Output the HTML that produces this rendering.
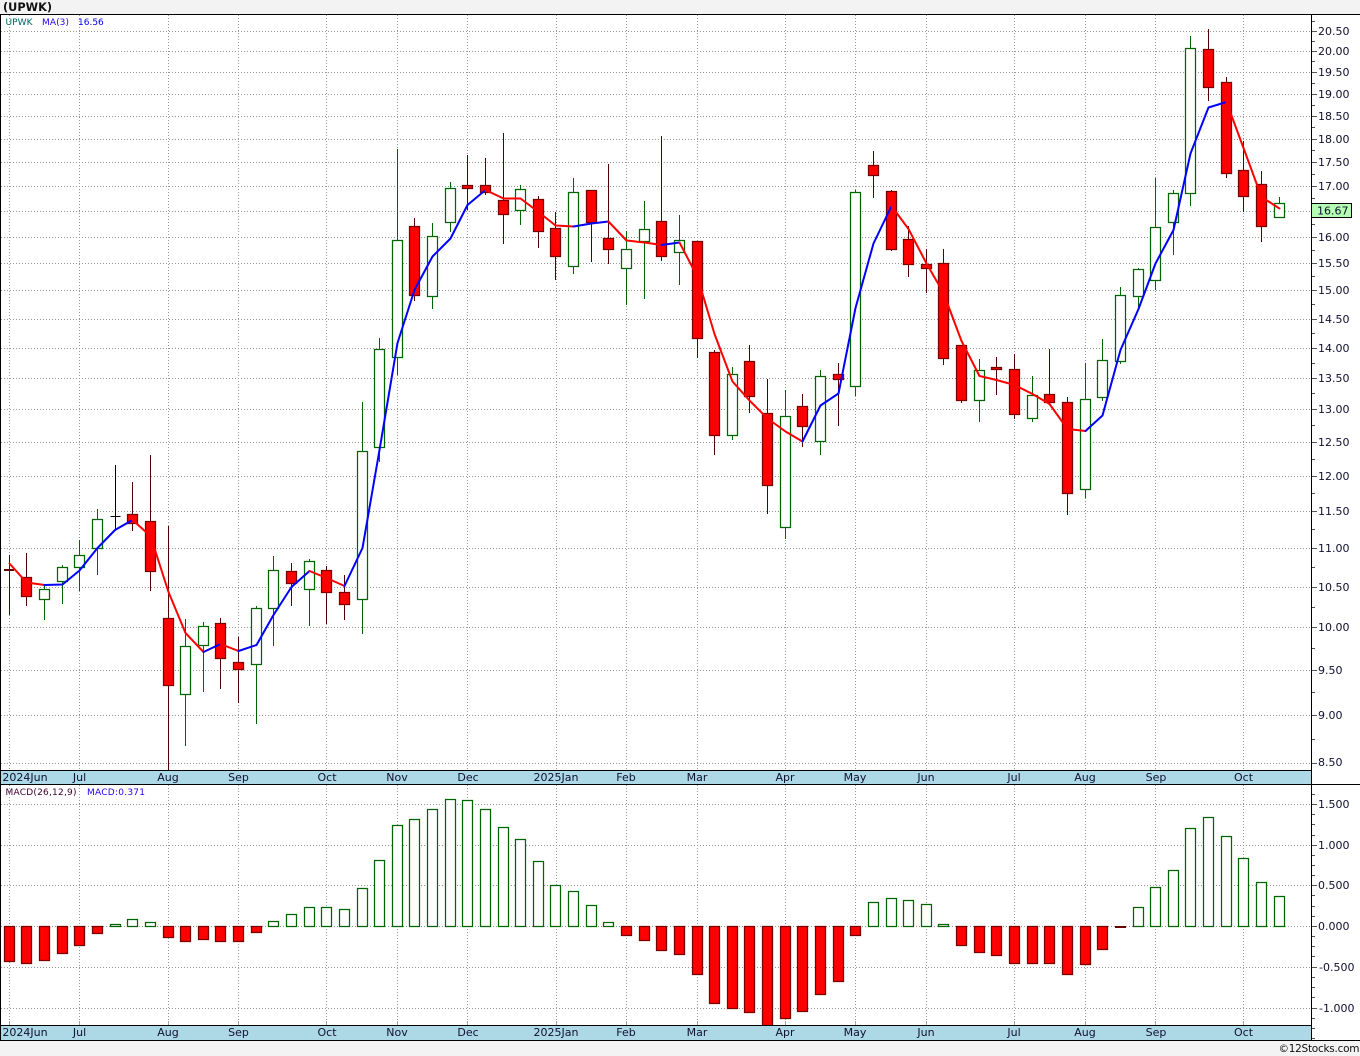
<!DOCTYPE html>
<html><head><meta charset="utf-8"><title>UPWK</title>
<style>
html,body{margin:0;padding:0;background:#f3f3f3;width:1360px;height:1056px;overflow:hidden}
svg{display:block;position:absolute;left:0;top:0}
text{font-family:"DejaVu Sans","Liberation Sans",sans-serif}
.l{font-size:11px;fill:#101030}
.s{font-size:9px}
</style></head><body>
<svg width="1360" height="1056" viewBox="0 0 1360 1056" xmlns="http://www.w3.org/2000/svg">
<rect width="1360" height="1056" fill="#f3f3f3"/>
<rect x="0" y="14" width="1360" height="1026" fill="#fff"/>
<text x="3" y="11" style="font-size:11.3px;font-weight:bold;fill:#111">(UPWK)</text>

<!-- grid -->
<path shape-rendering="crispEdges" fill="none" stroke="#969696" stroke-width="1" stroke-dasharray="1 2" d="M1 31.5H1311M1 51.5H1311M1 72.5H1311M1 94.5H1311M1 116.5H1311M1 139.5H1311M1 162.5H1311M1 186.5H1311M1 211.5H1311M1 237.5H1311M1 263.5H1311M1 290.5H1311M1 319.5H1311M1 348.5H1311M1 378.5H1311M1 409.5H1311M1 442.5H1311M1 476.5H1311M1 511.5H1311M1 548.5H1311M1 587.5H1311M1 627.5H1311M1 670.5H1311M1 715.5H1311M1 763.5H1311
M1 804.5H1311M1 845.5H1311M1 885.5H1311M1 926.5H1311M1 967.5H1311M1 1008.5H1311
M9.5 15V770M79.5 15V770M168.5 15V770M238.5 15V770M326.5 15V770M397.5 15V770M467.5 15V770M556.5 15V770M626.5 15V770M697.5 15V770M785.5 15V770M855.5 15V770M926.5 15V770M1014.5 15V770M1085.5 15V770M1155.5 15V770M1243.5 15V770
M9.5 785V1021M79.5 785V1021M168.5 785V1021M238.5 785V1021M326.5 785V1021M397.5 785V1021M467.5 785V1021M556.5 785V1021M626.5 785V1021M697.5 785V1021M785.5 785V1021M855.5 785V1021M926.5 785V1021M1014.5 785V1021M1085.5 785V1021M1155.5 785V1021M1243.5 785V1021"/>
<path shape-rendering="crispEdges" fill="none" stroke="#a6a6a6" d="M9.5 1021V1025M79.5 1021V1025M168.5 1021V1025M238.5 1021V1025M326.5 1021V1025M397.5 1021V1025M467.5 1021V1025M556.5 1021V1025M626.5 1021V1025M697.5 1021V1025M785.5 1021V1025M855.5 1021V1025M926.5 1021V1025M1014.5 1021V1025M1085.5 1021V1025M1155.5 1021V1025M1243.5 1021V1025"/>

<!-- wicks -->
<path shape-rendering="crispEdges" fill="none" stroke="#006400" d="M44.5 585V620M62.5 565V604M79.5 540V591M97.5 509V575M185.5 619V746M203.5 622V692M256.5 606V724M273.5 556V646M309.5 559V626M362.5 402V634M379.5 338V462M397.5 149V375M432.5 223V309M450.5 182V232M520.5 185V225M573.5 178V274M626.5 231V305M644.5 201V299M679.5 215V285M732.5 367V440M785.5 390V539M820.5 370V455M855.5 190V396M979.5 359V422M1032.5 376V422M1085.5 363V498M1102.5 339V401M1120.5 287V364M1138.5 268V309M1155.5 178V290M1173.5 190V255M1190.5 36V206M1279.5 197V218"/>
<path shape-rendering="crispEdges" fill="none" stroke="#550000" d="M9.5 555V615M26.5 553V606M132.5 482V531M150.5 455V591M168.5 526V770M220.5 618V689M238.5 637V703M291.5 563V606M326.5 566V624M344.5 575V620M414.5 218V301M467.5 155V210M485.5 158V195M503.5 133V244M538.5 196V248M555.5 212V280M591.5 190V262M608.5 164V264M661.5 136V261M697.5 241V358M714.5 350V455M749.5 345V413M767.5 379V514M802.5 394V447M838.5 363V426M873.5 151V198M891.5 190V251M908.5 226V277M926.5 249V293M943.5 249V365M961.5 345V403M996.5 357V395M1014.5 354V419M1049.5 349V403M1067.5 397V515M1208.5 29V101M1226.5 77V178M1243.5 141V212M1261.5 171V242"/>
<path shape-rendering="crispEdges" fill="none" stroke="#000" d="M115.5 465V530M110.5 516.5H120.5"/>
<path shape-rendering="crispEdges" fill="none" stroke="#660000" stroke-width="2" d="M4 570H14"/>

<!-- green bodies -->
<path fill="#fff" stroke="#006400" stroke-width="1.25" d="M39.5 589.5h10V599.5h-10zM57.5 567.5h10V581.5h-10zM74.5 555.5h10V567.5h-10zM92.5 519.5h10V548.5h-10zM180.5 646.5h10V694.5h-10zM198.5 626.5h10V645.5h-10zM251.5 608.5h10V664.5h-10zM268.5 570.5h10V608.5h-10zM304.5 561.5h10V589.5h-10zM357.5 451.5h10V599.5h-10zM374.5 349.5h10V447.5h-10zM392.5 240.5h10V357.5h-10zM427.5 236.5h10V296.5h-10zM445.5 188.5h10V222.5h-10zM515.5 189.5h10V210.5h-10zM568.5 192.5h10V266.5h-10zM621.5 249.5h10V268.5h-10zM639.5 229.5h10V241.5h-10zM674.5 240.5h10V252.5h-10zM727.5 374.5h10V435.5h-10zM780.5 416.5h10V527.5h-10zM815.5 376.5h10V441.5h-10zM850.5 192.5h10V386.5h-10zM974.5 370.5h10V400.5h-10zM1027.5 395.5h10V418.5h-10zM1080.5 399.5h10V489.5h-10zM1097.5 360.5h10V397.5h-10zM1115.5 295.5h10V361.5h-10zM1133.5 269.5h10V296.5h-10zM1150.5 227.5h10V280.5h-10zM1168.5 193.5h10V222.5h-10zM1185.5 48.5h10V193.5h-10zM1274.5 203.5h10V217.5h-10z"/>
<!-- red bodies -->
<path fill="#f00" stroke="#7a0000" stroke-width="1.25" d="M21.5 577.5h10V596.5h-10zM127.5 514.5h10V523.5h-10zM145.5 521.5h10V571.5h-10zM163.5 618.5h10V685.5h-10zM215.5 623.5h10V658.5h-10zM233.5 662.5h10V669.5h-10zM286.5 571.5h10V583.5h-10zM321.5 570.5h10V592.5h-10zM339.5 592.5h10V604.5h-10zM409.5 226.5h10V295.5h-10zM462.5 185.5h10V188.5h-10zM480.5 185.5h10V192.5h-10zM498.5 200.5h10V214.5h-10zM533.5 199.5h10V231.5h-10zM550.5 228.5h10V256.5h-10zM586.5 190.5h10V222.5h-10zM603.5 238.5h10V249.5h-10zM656.5 221.5h10V256.5h-10zM692.5 241.5h10V338.5h-10zM709.5 352.5h10V435.5h-10zM744.5 361.5h10V396.5h-10zM762.5 413.5h10V485.5h-10zM797.5 406.5h10V426.5h-10zM833.5 374.5h10V379.5h-10zM868.5 165.5h10V175.5h-10zM886.5 191.5h10V249.5h-10zM903.5 239.5h10V264.5h-10zM921.5 264.5h10V268.5h-10zM938.5 263.5h10V358.5h-10zM956.5 345.5h10V400.5h-10zM991.5 367.5h10V369.5h-10zM1009.5 369.5h10V414.5h-10zM1044.5 394.5h10V402.5h-10zM1062.5 402.5h10V493.5h-10zM1203.5 49.5h10V87.5h-10zM1221.5 82.5h10V173.5h-10zM1238.5 170.5h10V196.5h-10zM1256.5 184.5h10V226.5h-10z"/>

<!-- MA line -->
<g fill="none" stroke-width="2" stroke-linejoin="round" stroke-linecap="round">
<polyline stroke="#f00" points="9.5,563.5 26.5,582.5 44.5,585"/>
<polyline stroke="#00f" points="44.5,585 62.5,584.5 79.5,570.5 97.5,548 115,530 132.5,520"/>
<polyline stroke="#f00" points="132.5,520 150.5,536 168.5,592 185.5,633 203.5,652"/>
<polyline stroke="#00f" points="203.5,652 220.5,644"/>
<polyline stroke="#f00" points="220.5,644 238.5,651"/>
<polyline stroke="#00f" points="238.5,651 256.5,645 273.5,615 291.5,587 309.5,571"/>
<polyline stroke="#f00" points="309.5,571 326.5,578 344.5,586"/>
<polyline stroke="#00f" points="344.5,586 362.5,548 379.5,450 397.5,343 414.5,290 432.5,256.5 450.5,238.5 467.5,205 485.5,190"/>
<polyline stroke="#f00" points="485.5,190 503.5,198.5 520.5,198.5 538.5,212 555.5,225.5 573.5,226.5"/>
<polyline stroke="#00f" points="573.5,226.5 591.5,223.5 608.5,221.5"/>
<polyline stroke="#f00" points="608.5,221.5 626.5,240.5 644.5,242.5 661.5,245"/>
<polyline stroke="#00f" points="661.5,245 679.5,242.5"/>
<polyline stroke="#f00" points="679.5,242.5 697.5,277 714.5,334 732.5,381.5 749.5,400.5 767.5,418.5 785.5,431.5 802.5,441.5"/>
<polyline stroke="#00f" points="802.5,441.5 820.5,405.5 838.5,393.5 855.5,308 873.5,243.5 891.5,206"/>
<polyline stroke="#f00" points="891.5,206 908.5,229 926.5,263.5 943.5,293 961.5,341 979.5,376 996.5,380 1014.5,385 1032.5,394 1049.5,404 1067.5,429 1085.5,431"/>
<polyline stroke="#00f" points="1085.5,431 1102.5,415.5 1120.5,350 1138.5,309 1155.5,263.5 1173.5,230 1190.5,153.5 1208.5,107.5 1226.5,102"/>
<polyline stroke="#f00" points="1226.5,102 1243.5,148 1261.5,197 1279.5,208.5"/>
</g>

<!-- MACD bars -->
<path fill="#fff" stroke="#006400" stroke-width="1.25" d="M110.5 924.5h10V926.5h-10zM127.5 919.5h10V926.5h-10zM145.5 922.5h10V926.5h-10zM268.5 921.5h10V926.5h-10zM286.5 914.5h10V926.5h-10zM304.5 907.5h10V926.5h-10zM321.5 907.5h10V926.5h-10zM339.5 909.5h10V926.5h-10zM357.5 888.5h10V926.5h-10zM374.5 860.5h10V926.5h-10zM392.5 825.5h10V926.5h-10zM409.5 819.5h10V926.5h-10zM427.5 809.5h10V926.5h-10zM445.5 799.5h10V926.5h-10zM462.5 800.5h10V926.5h-10zM480.5 809.5h10V926.5h-10zM498.5 827.5h10V926.5h-10zM515.5 839.5h10V926.5h-10zM533.5 861.5h10V926.5h-10zM550.5 885.5h10V926.5h-10zM568.5 891.5h10V926.5h-10zM586.5 905.5h10V926.5h-10zM603.5 922.5h10V926.5h-10zM868.5 902.5h10V926.5h-10zM886.5 898.5h10V926.5h-10zM903.5 900.5h10V926.5h-10zM921.5 904.5h10V926.5h-10zM938.5 924.5h10V926.5h-10zM1133.5 907.5h10V926.5h-10zM1150.5 887.5h10V926.5h-10zM1168.5 870.5h10V926.5h-10zM1185.5 828.5h10V926.5h-10zM1203.5 817.5h10V926.5h-10zM1221.5 836.5h10V926.5h-10zM1238.5 858.5h10V926.5h-10zM1256.5 882.5h10V926.5h-10zM1274.5 896.5h10V926.5h-10z"/>
<path fill="#f00" stroke="#7a0000" stroke-width="1.25" d="M4.5 926.5h10V961.5h-10zM21.5 926.5h10V963.5h-10zM39.5 926.5h10V960.5h-10zM57.5 926.5h10V953.5h-10zM74.5 926.5h10V945.5h-10zM92.5 926.5h10V933.5h-10zM163.5 926.5h10V937.5h-10zM180.5 926.5h10V941.5h-10zM198.5 926.5h10V939.5h-10zM215.5 926.5h10V941.5h-10zM233.5 926.5h10V941.5h-10zM251.5 926.5h10V932.5h-10zM621.5 926.5h10V935.5h-10zM639.5 926.5h10V940.5h-10zM656.5 926.5h10V950.5h-10zM674.5 926.5h10V954.5h-10zM692.5 926.5h10V974.5h-10zM709.5 926.5h10V1003.5h-10zM727.5 926.5h10V1008.5h-10zM744.5 926.5h10V1012.5h-10zM762.5 926.5h10V1025.5h-10zM780.5 926.5h10V1018.5h-10zM797.5 926.5h10V1011.5h-10zM815.5 926.5h10V994.5h-10zM833.5 926.5h10V981.5h-10zM850.5 926.5h10V935.5h-10zM956.5 926.5h10V945.5h-10zM974.5 926.5h10V952.5h-10zM991.5 926.5h10V955.5h-10zM1009.5 926.5h10V963.5h-10zM1027.5 926.5h10V963.5h-10zM1044.5 926.5h10V963.5h-10zM1062.5 926.5h10V974.5h-10zM1080.5 926.5h10V964.5h-10zM1097.5 926.5h10V949.5h-10z"/>
<path shape-rendering="crispEdges" fill="none" stroke="#660000" stroke-width="2" d="M1115 927H1126"/>

<!-- bands -->
<rect x="1" y="771" width="1310" height="13" fill="#add8e6"/>
<rect x="1" y="1026" width="1310" height="14" fill="#add8e6"/>

<!-- frame -->
<path shape-rendering="crispEdges" fill="none" stroke="#000" d="M0 14.5H1360M0 770.5H1311M0 784.5H1360M0 1025.5H1311M0 1040.5H1360M0.5 14V1041M1311.5 14V1041"/>

<!-- ticks -->
<path shape-rendering="crispEdges" fill="none" stroke="#555" d="M1312 31.5H1317M1312 51.5H1317M1312 72.5H1317M1312 94.5H1317M1312 116.5H1317M1312 139.5H1317M1312 162.5H1317M1312 186.5H1317M1312 211.5H1317M1312 237.5H1317M1312 263.5H1317M1312 290.5H1317M1312 319.5H1317M1312 348.5H1317M1312 378.5H1317M1312 409.5H1317M1312 442.5H1317M1312 476.5H1317M1312 511.5H1317M1312 548.5H1317M1312 587.5H1317M1312 627.5H1317M1312 670.5H1317M1312 715.5H1317M1312 763.5H1317
M1312 21.5H1315M1312 41.5H1315M1312 61.5H1315M1312 83.5H1315M1312 105.5H1315M1312 127.5H1315M1312 150.5H1315M1312 174.5H1315M1312 198.5H1315M1312 224.5H1315M1312 250.5H1315M1312 276.5H1315M1312 304.5H1315M1312 333.5H1315M1312 363.5H1315M1312 393.5H1315M1312 425.5H1315M1312 459.5H1315M1312 493.5H1315M1312 529.5H1315M1312 567.5H1315M1312 607.5H1315M1312 648.5H1315M1312 692.5H1315M1312 739.5H1315
M1312 804.5H1317M1312 845.5H1317M1312 885.5H1317M1312 926.5H1317M1312 967.5H1317M1312 1008.5H1317
M1312 794.5H1315M1312 814.5H1315M1312 824.5H1315M1312 835.5H1315M1312 855.5H1315M1312 865.5H1315M1312 875.5H1315M1312 895.5H1315M1312 906.5H1315M1312 916.5H1315M1312 936.5H1315M1312 946.5H1315M1312 956.5H1315M1312 977.5H1315M1312 987.5H1315M1312 997.5H1315M1312 1018.5H1315M1312 1028.5H1315M1312 1038.5H1315"/>

<!-- price labels -->
<g class="l">
<text class="l" x="1318" y="35">20.50</text>
<text class="l" x="1318" y="55">20.00</text>
<text class="l" x="1318" y="76">19.50</text>
<text class="l" x="1318" y="98">19.00</text>
<text class="l" x="1318" y="120">18.50</text>
<text class="l" x="1318" y="143">18.00</text>
<text class="l" x="1318" y="166">17.50</text>
<text class="l" x="1318" y="190">17.00</text>
<text class="l" x="1318" y="241">16.00</text>
<text class="l" x="1318" y="267">15.50</text>
<text class="l" x="1318" y="294">15.00</text>
<text class="l" x="1318" y="323">14.50</text>
<text class="l" x="1318" y="352">14.00</text>
<text class="l" x="1318" y="382">13.50</text>
<text class="l" x="1318" y="413">13.00</text>
<text class="l" x="1318" y="446">12.50</text>
<text class="l" x="1318" y="480">12.00</text>
<text class="l" x="1318" y="515">11.50</text>
<text class="l" x="1318" y="552">11.00</text>
<text class="l" x="1318" y="591">10.50</text>
<text class="l" x="1318" y="631">10.00</text>
<text class="l" x="1318" y="674">9.50</text>
<text class="l" x="1318" y="719">9.00</text>
<text class="l" x="1318" y="766">8.50</text>
<text class="l" x="1318" y="808">1.500</text>
<text class="l" x="1318" y="849">1.000</text>
<text class="l" x="1318" y="889">0.500</text>
<text class="l" x="1318" y="930">0.000</text>
<text class="l" x="1319" y="971">-0.500</text>
<text class="l" x="1319" y="1012">-1.000</text>
</g>
<rect x="1311.5" y="203.5" width="40" height="14" fill="#b4ffb4" stroke="#000" shape-rendering="crispEdges"/>
<text class="l" x="1317" y="214.5">16.67</text>

<!-- month labels -->
<g text-anchor="middle">
<text class="l" x="25" y="781">2024Jun</text><text class="l" x="79.5" y="781">Jul</text><text class="l" x="168" y="781">Aug</text><text class="l" x="238.5" y="781">Sep</text><text class="l" x="327" y="781">Oct</text><text class="l" x="397" y="781">Nov</text><text class="l" x="468" y="781">Dec</text><text class="l" x="556" y="781">2025Jan</text><text class="l" x="626" y="781">Feb</text><text class="l" x="697" y="781">Mar</text><text class="l" x="785" y="781">Apr</text><text class="l" x="855" y="781">May</text><text class="l" x="926" y="781">Jun</text><text class="l" x="1014" y="781">Jul</text><text class="l" x="1085" y="781">Aug</text><text class="l" x="1156" y="781">Sep</text><text class="l" x="1243.5" y="781">Oct</text>
<text class="l" x="25" y="1036">2024Jun</text><text class="l" x="79.5" y="1036">Jul</text><text class="l" x="168" y="1036">Aug</text><text class="l" x="238.5" y="1036">Sep</text><text class="l" x="327" y="1036">Oct</text><text class="l" x="397" y="1036">Nov</text><text class="l" x="468" y="1036">Dec</text><text class="l" x="556" y="1036">2025Jan</text><text class="l" x="626" y="1036">Feb</text><text class="l" x="697" y="1036">Mar</text><text class="l" x="785" y="1036">Apr</text><text class="l" x="855" y="1036">May</text><text class="l" x="926" y="1036">Jun</text><text class="l" x="1014" y="1036">Jul</text><text class="l" x="1085" y="1036">Aug</text><text class="l" x="1156" y="1036">Sep</text><text class="l" x="1243.5" y="1036">Oct</text>
</g>

<!-- legends -->
<text class="s" x="5.5" y="25" fill="#006464" textLength="27">UPWK</text>
<text class="s" x="42" y="25" fill="#2200ee" textLength="27">MA(3)</text>
<text class="s" x="78" y="25" fill="#0000ee">16.56</text>
<text class="s" x="5.5" y="795" fill="#400030" textLength="71">MACD(26,12,9)</text>
<text class="s" x="87" y="795" fill="#2200ee" textLength="58">MACD:0.371</text>

<text x="1359.5" y="1052" text-anchor="end" textLength="81" style="font-size:10.5px;fill:#111">©12Stocks.com</text>
</svg>
</body></html>
